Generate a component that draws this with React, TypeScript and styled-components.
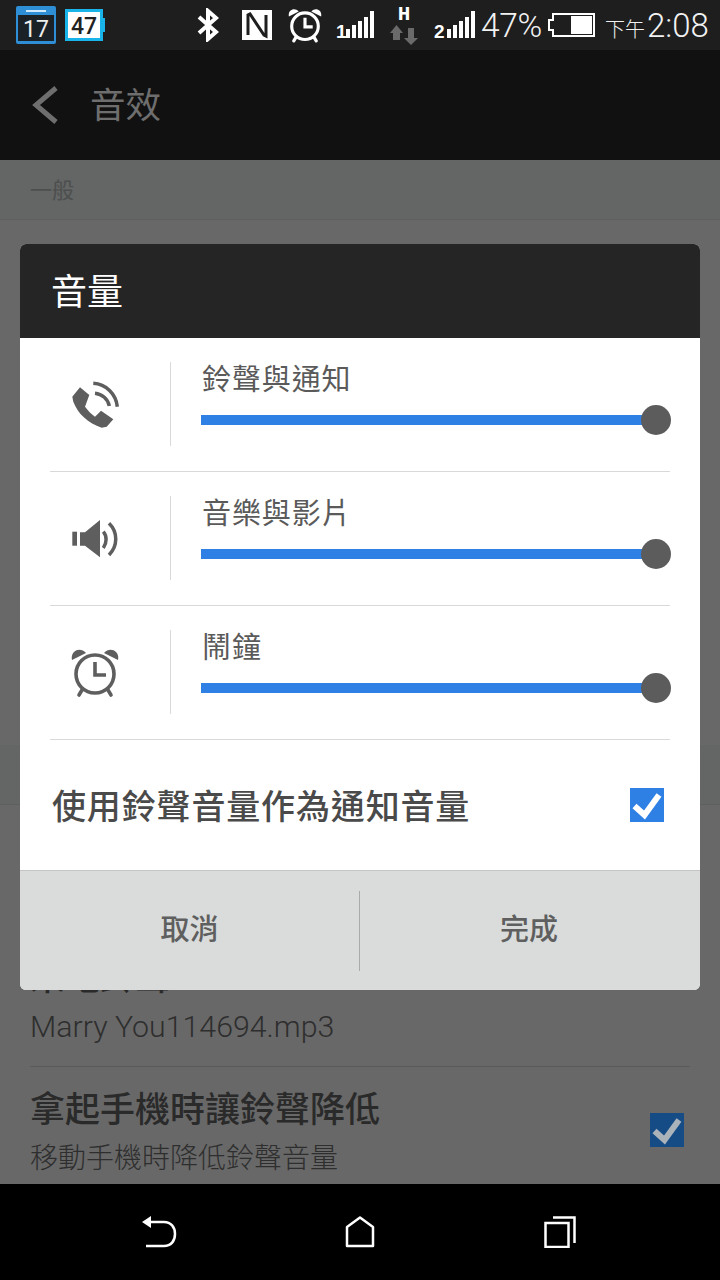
import React from 'react';
import styled, { createGlobalStyle } from 'styled-components';

const GlobalStyle = createGlobalStyle`
  html, body { margin: 0; padding: 0; background: #000; }
  * { box-sizing: border-box; }
  body { font-family: "Roboto", "Noto Sans CJK TC", sans-serif; }
`;

const Screen = styled.div`
  position: relative;
  width: 720px;
  height: 1280px;
  display: flex;
  flex-direction: column;
  overflow: hidden;
  background: #686868;
`;

const StatusBar = styled.div`
  height: 50px;
  flex: none;
  background: #1e1e1e;
  display: flex;
  align-items: center;
  color: #fff;
  padding-left: 16px;
`;

const StatusIcon = styled.svg<{ $ml?: number; $mt?: number }>`
  display: block;
  flex: none;
  margin-left: ${(p) => p.$ml ?? 0}px;
  margin-top: ${(p) => p.$mt ?? 0}px;
`;

const Percent = styled.span`
  font-size: 33.5px;
  font-weight: 300;
  margin-left: 6px;
  color: #f2f2f2;
  width: 67px;
  letter-spacing: -0.3px;
`;

const Clock = styled.span`
  display: flex;
  align-items: baseline;
  margin-left: 10px;
  font-size: 33px;
  font-weight: 300;
  color: #f2f2f2;
`;

const ClockPrefix = styled.span`
  font-size: 20px;
  width: 42px;
  font-weight: 300;
`;

const ActionBar = styled.div`
  height: 110px;
  flex: none;
  background: #111111;
  display: flex;
  align-items: center;
  padding-left: 32px;
  color: #6e6e6e;
`;

const ActionTitle = styled.span`
  font-size: 35.5px;
  margin-left: 32px;
  margin-bottom: 6px;
`;

const Content = styled.div`
  flex: 1;
  display: flex;
  flex-direction: column;
  min-height: 0;
  overflow: hidden;
`;

const SectionHead = styled.div<{ $top?: number }>`
  height: 60px;
  flex: none;
  margin-top: ${(p) => p.$top ?? 0}px;
  background: #636665;
  border-bottom: 1px solid #5e5f5f;
  padding: 0 0 4px 30px;
  display: flex;
  align-items: center;
  font-size: 22px;
  color: #4d4e4e;
`;

const ListRow = styled.div<{ $height: number; $line?: boolean }>`
  margin: 0 30px;
  height: ${(p) => p.$height}px;
  flex: none;
  display: flex;
  align-items: center;
  justify-content: space-between;
  border-bottom: ${(p) => (p.$line ? '1px solid #5a5a5a' : 'none')};
  padding: 5px 6px 0 0;
`;

const RowText = styled.div`
  display: flex;
  flex-direction: column;
`;

const RowTitle = styled.div`
  font-size: 35px;
  line-height: 46px;
  color: #2a2a2a;
  font-weight: 500;
`;

const RowSub = styled.div<{ $latin?: boolean }>`
  font-size: ${(p) => (p.$latin ? 30.3 : 28)}px;
  line-height: 50px;
  font-weight: 300;
  color: #2e2e2e;
`;

const CheckBox = styled.div<{ $dim?: boolean }>`
  width: 34px;
  height: 34px;
  flex: none;
  margin-bottom: ${(p) => (p.$dim ? 12 : 0)}px;
  background: ${(p) => (p.$dim ? '#164c86' : '#2f80e4')};
  color: ${(p) => (p.$dim ? '#aab2ba' : '#fff')};
`;

const NavBar = styled.div`
  height: 96px;
  flex: none;
  background: #000;
  display: grid;
  grid-template-columns: repeat(3, 200px);
  justify-content: center;
  align-items: center;
  justify-items: center;
`;

const Dialog = styled.div`
  position: absolute;
  left: 20px;
  top: 244px;
  width: 680px;
  height: 746px;
  border-radius: 6px;
  overflow: hidden;
  display: flex;
  flex-direction: column;
  background: #fff;
`;

const DialogHead = styled.div`
  height: 94px;
  flex: none;
  background: #252525;
  color: #fff;
  font-size: 36px;
  padding: 0 0 4px 31px;
  display: flex;
  align-items: center;
`;

const DialogBody = styled.div`
  flex: 1;
  padding: 0 30px;
  display: flex;
  flex-direction: column;
`;

const VolumeRow = styled.div`
  height: 134px;
  flex: none;
  display: grid;
  grid-template-columns: 121px 1fr;
  padding-top: 24px;
  border-bottom: 1px solid #d9d9d9;
`;

const VolumeIcon = styled.div`
  height: 84px;
  border-right: 1px solid #d9d9d9;
  display: flex;
  align-items: center;
  justify-content: center;
  padding: 2px 30px 0 0;
  color: #5e5e5e;
`;

const VolumeMain = styled.div`
  padding-left: 30px;
  display: flex;
  flex-direction: column;
`;

const VolumeLabel = styled.div`
  font-size: 29px;
  line-height: 34px;
  margin-top: 1px;
  padding-left: 1px;
  color: #5a5a5a;
  letter-spacing: 0.9px;
`;

const Track = styled.div`
  position: relative;
  height: 10px;
  margin-top: 18px;
  background: #2f80e4;
`;

const Thumb = styled.div`
  position: absolute;
  right: -1px;
  top: -10px;
  width: 30px;
  height: 30px;
  border-radius: 50%;
  background: #5c5c5c;
`;

const ToggleRow = styled.div`
  flex: 1;
  display: flex;
  align-items: center;
  justify-content: space-between;
  padding: 0 6px 0 2px;
  font-size: 34px;
  letter-spacing: 0.85px;
  color: #4a4a4a;
  font-weight: 500;
`;

const ToggleLabel = styled.span`
  margin-bottom: 2px;
`;

const DialogFoot = styled.div`
  height: 120px;
  flex: none;
  background: #d9dcdb;
  border-top: 1px solid #c4c6c6;
  display: grid;
  grid-template-columns: 339px 1fr;
  align-items: center;
`;

const FootButton = styled.div<{ $divider?: boolean }>`
  height: 80px;
  display: flex;
  align-items: center;
  justify-content: center;
  padding: 0 ${(p) => (p.$divider ? 2 : 0)}px 8px 0;
  font-size: 29px;
  font-weight: 500;
  color: #5f5f5f;
  border-left: ${(p) => (p.$divider ? '1px solid #a9abab' : 'none')};
`;

const Check = () => (
  <svg width="34" height="34" viewBox="0 0 34 34" style={{ display: 'block' }}>
    <path d="M4.500 18 L14.500 27 L29 7" fill="none" stroke="currentColor" strokeWidth="6" />
  </svg>
);

const AlarmShape = ({ w, h, sw }: { w: number; h: number; sw: number }) => (
  <svg width={w} height={h} viewBox="0 0 48 50" fill="none" stroke="currentColor" style={{ display: 'block' }}>
    <circle cx="24" cy="26" r="19" strokeWidth={sw} />
    <path d="M24 14V27H35" strokeWidth={sw} />
    <path d="M11 42L8 47M37 42L40 47" strokeWidth={sw} strokeLinecap="round" />
    <path d="M1 12C-1 3 9 -2 15 5Z" fill="currentColor" stroke="none" />
    <path d="M47 12C49 3 39 -2 33 5Z" fill="currentColor" stroke="none" />
  </svg>
);

const barHeights = [9, 13, 17, 21, 27];

const Bars = ({ label, start, ml }: { label: string; start: number; ml: number }) => (
  <StatusIcon width="41" height="32" viewBox="0 0 41 32" fill="#fff" $ml={ml} $mt={4}>
    <text x="0" y="27" fontSize="19" fontWeight="700" fontFamily="Liberation Sans">{label}</text>
    {barHeights.map((h, i) => (
      <rect key={h} x={start + i * 6} y={27 - h} width="4" height={h} />
    ))}
  </StatusIcon>
);

const volumes = [
  {
    label: '鈴聲與通知',
    icon: (
      <svg width="48" height="48" viewBox="0 0 48 48" fill="none" stroke="currentColor">
        <path
          d="M9 6.300 L1.300 15.700 L2.300 20.700 C5 27 8 32 12.300 35.700 C18 41 24 44.500 30.700 46.700 L35.700 45.700 L42.300 38.300 L30 29.700 L24 35.700 C20 33 17 29.500 14 25.700 L18.300 14 Z"
          fill="currentColor"
          stroke="none"
        />
        <path d="M24 12.300 C31 13 37 18 38.300 25" strokeWidth="3.500" />
        <path d="M22.300 2.300 C35 3 45 13 46.300 25.700" strokeWidth="3.500" />
      </svg>
    ),
  },
  {
    label: '音樂與影片',
    icon: (
      <svg width="48" height="38" viewBox="0 0 48 38" fill="currentColor" stroke="none">
        <rect x="1.300" y="11.700" width="4.700" height="14" />
        <path d="M9 12.300 H14 L29 0 V37.300 L14 25.700 H9 Z" />
        <path d="M32.300 11.700 C36 16 36 23 32.300 28" fill="none" stroke="currentColor" strokeWidth="3.500" />
        <path d="M38 3.300 C47 12 47 26 38 35" fill="none" stroke="currentColor" strokeWidth="3.500" />
      </svg>
    ),
  },
  { label: '鬧鐘', icon: <AlarmShape w={48} h={50} sw={3.6} /> },
];

export default function App() {
  return (
    <Screen>
      <GlobalStyle />
      <StatusBar>
        <StatusIcon width="40" height="38" viewBox="0 0 40 38">
          <rect width="40" height="38" rx="2" fill="#2f8fd6" />
          <rect x="10" y="4" width="20" height="2" fill="#cfeaff" />
          <rect x="2" y="9" width="36" height="26" fill="#1b2227" />
          <text x="20" y="31" textAnchor="middle" fontSize="23" fill="#eee" fontFamily="Roboto">17</text>
        </StatusIcon>
        <StatusIcon width="40" height="32" viewBox="0 0 40 32" $ml={9}>
          <rect x="1.500" y="1.500" width="35" height="29" fill="#fff" stroke="#19b5ea" strokeWidth="3" />
          <rect x="37" y="9" width="3" height="14" fill="#19b5ea" />
          <text x="19" y="25" textAnchor="middle" fontSize="23" fontWeight="500" fill="#222" fontFamily="Roboto">47</text>
        </StatusIcon>
        <StatusIcon width="22" height="34" viewBox="0 0 22 34" fill="none" stroke="#fff" strokeWidth="4" $ml={92}>
          <path d="M2 9 L19 24 L11 31 V3 L19 10 L2 25" />
        </StatusIcon>
        <StatusIcon width="30" height="30" viewBox="0 0 30 30" $ml={23}>
          <path d="M0 0 H30 V30 H0 Z" fill="#fff" />
          <path d="M6 25 V5 L8 4 L22 25 L24 26 V5" fill="none" stroke="#1e1e1e" strokeWidth="3" />
        </StatusIcon>
        <StatusIcon as="div" $ml={16}>
          <AlarmShape w={34} h={35} sw={4.5} />
        </StatusIcon>
        <Bars label="1" start={10} ml={14} />
        <StatusIcon width="30" height="46" viewBox="0 0 30 46" $ml={13} $mt={2}>
          <text x="14" y="17" textAnchor="middle" fontSize="21" fontWeight="700" fill="#fff" fontFamily="Liberation Mono">H</text>
          <path d="M6.500 22 L13 30 H10 V37 H3 V30 H0 Z" fill="#6a6a6a" />
          <path d="M18 25 H24 V35 H28 L21 42 L14 35 H18 Z" fill="#6a6a6a" />
        </StatusIcon>
        <Bars label="2" start={13} ml={14} />
        <Percent>47%</Percent>
        <StatusIcon width="47" height="24" viewBox="0 0 47 24" fill="none">
          <path d="M5 1 H46 V23 H5 V17 H1 V7 H5 Z" stroke="#fff" strokeWidth="2" />
          <rect x="23" y="3" width="21" height="18" fill="#fff" />
        </StatusIcon>
        <Clock>
          <ClockPrefix>下午</ClockPrefix>
          2:08
        </Clock>
      </StatusBar>

      <ActionBar>
        <svg width="26" height="38" viewBox="0 0 26 38" fill="none" stroke="currentColor" strokeWidth="5">
          <path d="M24 2 L4 19 L24 36" />
        </svg>
        <ActionTitle>音效</ActionTitle>
      </ActionBar>

      <Content>
        <SectionHead>一般</SectionHead>
        <SectionHead $top={525} />
        <ListRow $height={131} />
        <ListRow $height={131} $line>
          <RowText>
            <RowTitle>來電鈴聲</RowTitle>
            <RowSub $latin>Marry You114694.mp3</RowSub>
          </RowText>
        </ListRow>
        <ListRow $height={132}>
          <RowText>
            <RowTitle>拿起手機時讓鈴聲降低</RowTitle>
            <RowSub>移動手機時降低鈴聲音量</RowSub>
          </RowText>
          <CheckBox $dim>
            <Check />
          </CheckBox>
        </ListRow>
      </Content>

      <NavBar>
        <svg width="36" height="32" viewBox="0 0 36 32" fill="none" stroke="#fff" strokeWidth="2.500">
          <path d="M0 6 L9 0 V12 Z" fill="#fff" stroke="none" />
          <path d="M7 6 H22 C29 6 33 11 33 18 C33 25 29 30 22 30 H4" />
        </svg>
        <svg width="30" height="32" viewBox="0 0 30 32" fill="none" stroke="#fff" strokeWidth="2.500">
          <path d="M2 30 V11 L15 1.500 L28 11 V30 Z" strokeLinejoin="round" />
        </svg>
        <svg width="32" height="32" viewBox="0 0 32 32" fill="none" stroke="#fff" strokeWidth="2.500">
          <rect x="1.500" y="7" width="23" height="24" />
          <path d="M9 1.500 H30.500 V27" />
        </svg>
      </NavBar>

      <Dialog>
        <DialogHead>音量</DialogHead>
        <DialogBody>
          {volumes.map((v) => (
            <VolumeRow key={v.label}>
              <VolumeIcon>{v.icon}</VolumeIcon>
              <VolumeMain>
                <VolumeLabel>{v.label}</VolumeLabel>
                <Track>
                  <Thumb />
                </Track>
              </VolumeMain>
            </VolumeRow>
          ))}
          <ToggleRow>
            <ToggleLabel>使用鈴聲音量作為通知音量</ToggleLabel>
            <CheckBox>
              <Check />
            </CheckBox>
          </ToggleRow>
        </DialogBody>
        <DialogFoot>
          <FootButton>取消</FootButton>
          <FootButton $divider>完成</FootButton>
        </DialogFoot>
      </Dialog>
    </Screen>
  );
}
